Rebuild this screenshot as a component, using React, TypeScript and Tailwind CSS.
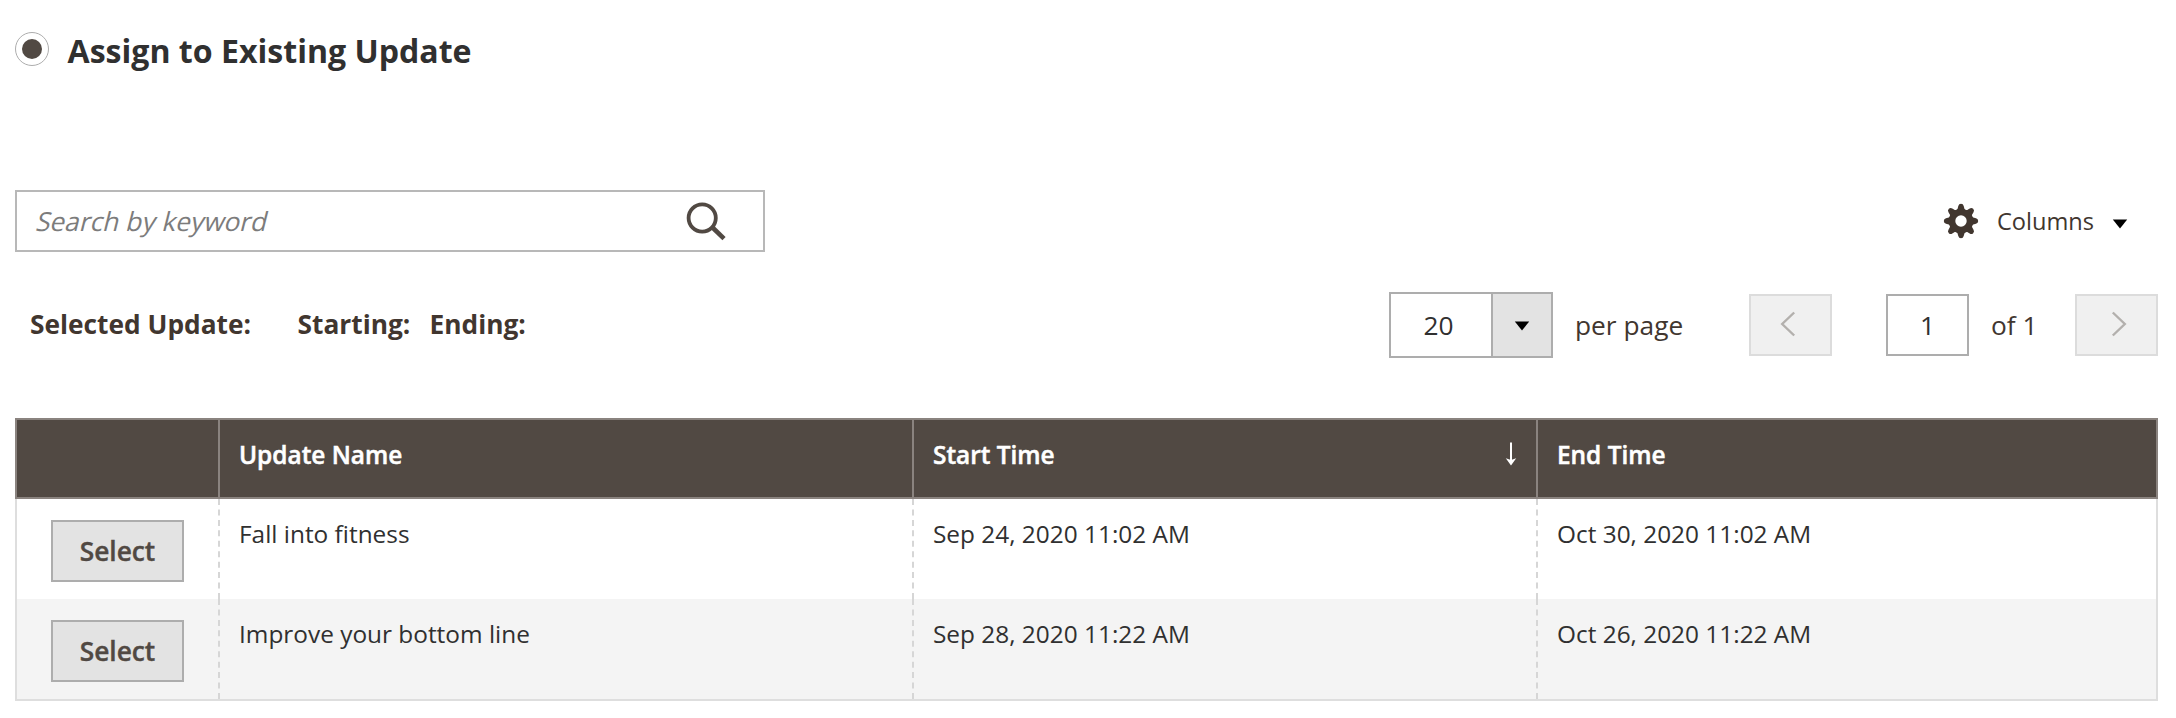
import React from "react";

const rows = [
  { name: "Fall into fitness", start: "Sep 24, 2020 11:02 AM", end: "Oct 30, 2020 11:02 AM" },
  { name: "Improve your bottom line", start: "Sep 28, 2020 11:22 AM", end: "Oct 26, 2020 11:22 AM" },
];

const grid = "grid grid-cols-[201px_694px_624px_1fr]";

function GearIcon() {
  const teeth = [0, 45, 90, 135, 180, 225, 270, 315];
  return (
    <svg width="36" height="36" viewBox="-18 -18 36 36" className="shrink-0">
      <g fill="#41362f">
        {teeth.map((a) => (
          <path key={a} d="M-5 -10 Q-3 -12 -2.7 -15 Q-2.2 -17.2 0 -17.2 Q2.2 -17.2 2.7 -15 Q3 -12 5 -10 Z" transform={`rotate(${a})`} />
        ))}
      </g>
      <circle r="9" fill="none" stroke="#41362f" strokeWidth="6.6" />
    </svg>
  );
}

function Caret() {
  return (
    <svg width="16" height="10" viewBox="0 0 16 10" className="shrink-0">
      <path d="M0.8 0.5H15.2L8 9.6Z" fill="#000" />
    </svg>
  );
}

function PagerButton({ dir }: { dir: "prev" | "next" }) {
  return (
    <button className="flex h-[62px] w-[83px] items-center justify-center border-2 border-[#dcdcdc] bg-[#f0f0f0]">
      <svg
        width="16"
        height="26"
        viewBox="0 0 16 26"
        fill="none"
        stroke="#b3b0ad"
        strokeWidth="2.4"
        className={dir === "prev" ? "-mt-[2px] mr-[5px]" : "-mt-[2px] ml-[5px]"}
      >
        <path d={dir === "prev" ? "M14.2 1.5L2.2 13L14.2 24.5" : "M1.8 1.5L13.8 13L1.8 24.5"} />
      </svg>
    </button>
  );
}

export default function App() {
  return (
    <main className="h-[718px] w-[2176px] overflow-hidden whitespace-nowrap bg-white pl-[15px] pr-[18px] pt-[32px] font-['Open_Sans',sans-serif] text-[#41362f]">
      <header className="flex h-[34px] items-center">
        <span className="flex size-[34px] items-center justify-center rounded-full border-[1.5px] border-[#adadad]">
          <span className="size-[20px] rounded-full bg-[#514943]" />
        </span>
        <h1 className="ml-[18.5px] mt-[4px] text-[32.1px] leading-[40px] font-bold text-[#303030]">Assign to Existing Update</h1>
      </header>

      <section className="mt-[124px] flex h-[62px] items-center justify-between">
        <div className="flex h-[62px] w-[750px] items-center justify-between border-2 border-[#b8b8b8] pl-[20px] pr-[37px]">
          <span className="mt-[2px] -skew-x-[14deg] text-[26.3px] text-[#7c7c7c]">Search by keyword</span>
          <svg width="42" height="42" viewBox="0 0 42 42" fill="none" stroke="#514943">
            <circle cx="18.2" cy="18" r="13.6" strokeWidth="3.8" />
            <path d="M28.5 27.5L40 38.6" strokeWidth="4.6" />
          </svg>
        </div>
        <div className="flex items-center pr-[30px]">
          <GearIcon />
          <span className="ml-[18px] text-[23.6px] leading-[34px]">Columns</span>
          <span className="ml-[18px] mt-[5px]"><Caret /></span>
        </div>
      </section>

      <section className="mt-[40px] flex h-[66px] items-center">
        <div className="-mt-[2px] flex flex-1 pl-[15px] text-[26.3px] leading-[36px] font-bold">
          <span className="w-[267.5px]">Selected Update:</span>
          <span className="w-[132px]">Starting:</span>
          <span>Ending:</span>
        </div>
        <div className="flex h-[66px] w-[164px] border-2 border-[#adadad]">
          <div className="flex w-[100px] items-center justify-center pr-[5px] pt-[1px] text-[26.3px] text-[#303030]">20</div>
          <div className="flex flex-1 items-center justify-center border-l-2 border-[#adadad] bg-[#e3e3e3] pt-[2px]"><Caret /></div>
        </div>
        <span className="ml-[22px] w-[174px] text-[26.3px] leading-[36px]">per page</span>
        <PagerButton dir="prev" />
        <div className="ml-[54px] flex h-[62px] w-[83px] items-center justify-center border-2 border-[#adadad] pt-[1px] text-[26.3px] text-[#303030]">1</div>
        <span className="ml-[22px] w-[84px] text-[26.3px] leading-[36px]">of 1</span>
        <PagerButton dir="next" />
      </section>

      <section className="mt-[60px]">
        <div className={`${grid} h-[81px] border-2 border-[#8a837f] bg-[#514943] text-[24.4px] leading-[34px] font-semibold text-white [-webkit-text-stroke:0.5px_#fff]`}>
          <div />
          <div className="border-l-2 border-[#8a837f] pl-[19px] pt-[18px]">Update Name</div>
          <div className="flex justify-between border-l-2 border-[#8a837f] pl-[19px] pr-[19px] pt-[18px]">
            Start Time
            <svg width="12" height="24" viewBox="0 0 12 24" className="mt-[4px]">
              <path d="M6 0.5V19" stroke="#fff" strokeWidth="2" />
              <path d="M0.8 16.2L6 18L11.2 16.2L6 23.4Z" fill="#fff" />
            </svg>
          </div>
          <div className="border-l-2 border-[#8a837f] pl-[19px] pt-[18px]">End Time</div>
        </div>
        <div className="border-x-2 border-b-2 border-[#dedede] text-[24.4px] leading-[34px] text-[#303030]">
          {rows.map((r) => (
            <div key={r.name} className={`${grid} h-[100px] even:bg-[#f4f4f4]`}>
              <div className="pl-[34px] pt-[21px]">
                <button className="flex h-[62px] w-[133px] items-center justify-center border-2 border-[#adadad] bg-[#e3e3e3] text-[26.3px] font-semibold text-[#514943] [-webkit-text-stroke:0.4px_#514943]">Select</button>
              </div>
              <div className="border-l-2 border-dashed border-[#d6d6d6] pl-[19px] pt-[18px]">{r.name}</div>
              <div className="border-l-2 border-dashed border-[#d6d6d6] pl-[19px] pt-[18px]">{r.start}</div>
              <div className="border-l-2 border-dashed border-[#d6d6d6] pl-[19px] pt-[18px]">{r.end}</div>
            </div>
          ))}
        </div>
      </section>
    </main>
  );
}
